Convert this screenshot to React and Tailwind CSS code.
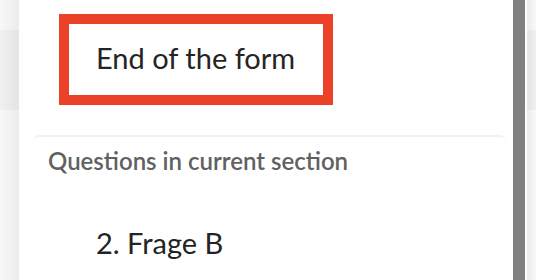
export default function App() {
  return (
    <div className="w-[536px] h-[280px] overflow-hidden flex bg-[#f8f8f8] font-['Lato','Open_Sans',sans-serif]">
      {/* Seitlicher Hintergrund links */}
      <div className="w-[19px] shrink-0 flex flex-col">
        <div className="h-[30px] bg-gradient-to-r from-[#f8f8f8] to-[#ececec]" />
        <div className="h-[80px] bg-gradient-to-r from-[#f0f0f0] to-[#e4e4e4]" />
        <div className="flex-1 bg-gradient-to-r from-[#f8f8f8] to-[#ececec]" />
      </div>

      {/* Panel */}
      <div className="w-[508px] shrink-0 bg-white flex">
        <div className="flex-1 min-w-0">
          <div className="pt-[14px] pl-[40px]">
            <div className="w-[274px] h-[91px] border-[10px] border-[#ea4128] pl-[27px] pt-[14px]">
              <p className="text-[29px] leading-[40px] text-[#242424]">End of the form</p>
            </div>
          </div>

          <div className="mt-[30px] ml-[14px] mr-[7px] border-t-2 border-[#f2f2f2] rounded-t-md pl-[15px] pt-[8px]">
            <h3 className="text-[24px] leading-[32px] font-semibold text-[#616161]">Questions in current section</h3>
            <p className="mt-[46px] pl-[48px] text-[29px] leading-[40px] text-[#242424]">2. Frage B</p>
          </div>
        </div>
        <div className="w-[12px] bg-[#808080] mr-[2px]" />
      </div>

      {/* Seitlicher Hintergrund rechts */}
      <div className="flex-1 flex flex-col">
        <div className="h-[30px] bg-gradient-to-r from-[#ececec] to-[#f8f8f8]" />
        <div className="h-[80px] bg-gradient-to-r from-[#e4e4e4] to-[#f0f0f0]" />
        <div className="flex-1 bg-gradient-to-r from-[#ececec] to-[#f8f8f8]" />
      </div>
    </div>
  );
}
